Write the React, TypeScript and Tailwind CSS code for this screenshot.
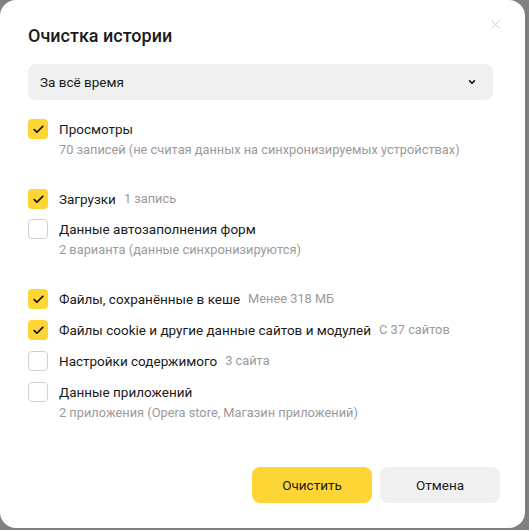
import { Check, ChevronDown, X } from "lucide-react";

type Item = { label: string; note?: string; sub?: string; checked: boolean };

const groups: Item[][] = [
    [{ label: "Просмотры", sub: "70 записей (не считая данных на синхронизируемых устройствах)", checked: true }],
    [
        { label: "Загрузки", note: "1 запись", checked: true },
        { label: "Данные автозаполнения форм", sub: "2 варианта (данные синхронизируются)", checked: false },
    ],
    [
        { label: "Файлы, сохранённые в кеше", note: "Менее 318 МБ", checked: true },
        { label: "Файлы cookie и другие данные сайтов и модулей", note: "С 37 сайтов", checked: true },
        { label: "Настройки содержимого", note: "3 сайта", checked: false },
        { label: "Данные приложений", sub: "2 приложения (Opera store, Магазин приложений)", checked: false },
    ],
];

function Row({ item }: { item: Item }) {
    return (
        <div className="flex gap-[11px]">
            {item.checked ? (
                <div className="w-5 h-5 shrink-0 rounded-[4px] bg-[#fdd535] flex items-center justify-center">
                    <Check className="w-[13px] h-[13px] text-black" strokeWidth={3} />
                </div>
            ) : (
                <div className="w-5 h-5 shrink-0 rounded-[4px] border border-[#cfcfcf] bg-white" />
            )}
            <div className="flex flex-col">
                <div className="h-5 flex items-center gap-2 text-[13.5px] leading-5 text-[#1a1a1a]">
                    <span>{item.label}</span>
                    {item.note && <span className="text-[12.8px] text-[#9a9a9a]">{item.note}</span>}
                </div>
                {item.sub && <div className="h-5 text-[12.8px] leading-5 text-[#9a9a9a] mt-[1px]">{item.sub}</div>}
            </div>
        </div>
    );
}

export default function App() {
    return (
        <div className="w-[529px] h-[530px] bg-[#808080] font-['Roboto',sans-serif]">
            <div className="relative w-[525px] h-[528px] bg-white rounded-[16px] pl-7 pr-8 pt-[24px]">
                <button className="absolute right-[22px] top-[17px] text-[#c4c4c4]">
                    <X className="w-[15px] h-[15px]" strokeWidth={1.5} />
                </button>
                <h1 className="text-[18px] leading-6 font-medium text-[#1a1a1a]">Очистка истории</h1>

                <div className="mt-[16px] w-[465px] h-9 rounded-[8px] bg-[#f0f0f0] flex items-center justify-between pl-3 pr-[16px]">
                    <span className="text-[13.5px] text-[#1a1a1a]">За всё время</span>
                    <ChevronDown className="w-[10px] h-[10px] text-black" strokeWidth={3.5} />
                </div>

                <div className="mt-[19px] flex flex-col gap-[29px]">
                    {groups.map((g, i) => (
                        <div key={i} className={i === 2 ? "flex flex-col gap-[11px]" : "flex flex-col gap-[10px]"}>
                            {g.map((it) => <Row key={it.label} item={it} />)}
                        </div>
                    ))}
                </div>

                <div className="absolute left-[252px] top-[467px] flex gap-2">
                    <button className="w-[120px] h-9 rounded-[8px] bg-[#fdd535] text-[13.5px] text-[#1a1a1a]">Очистить</button>
                    <button className="w-[120px] h-9 rounded-[8px] bg-[#f0f0f0] text-[13.5px] text-[#1a1a1a]">Отмена</button>
                </div>
            </div>
        </div>
    );
}
